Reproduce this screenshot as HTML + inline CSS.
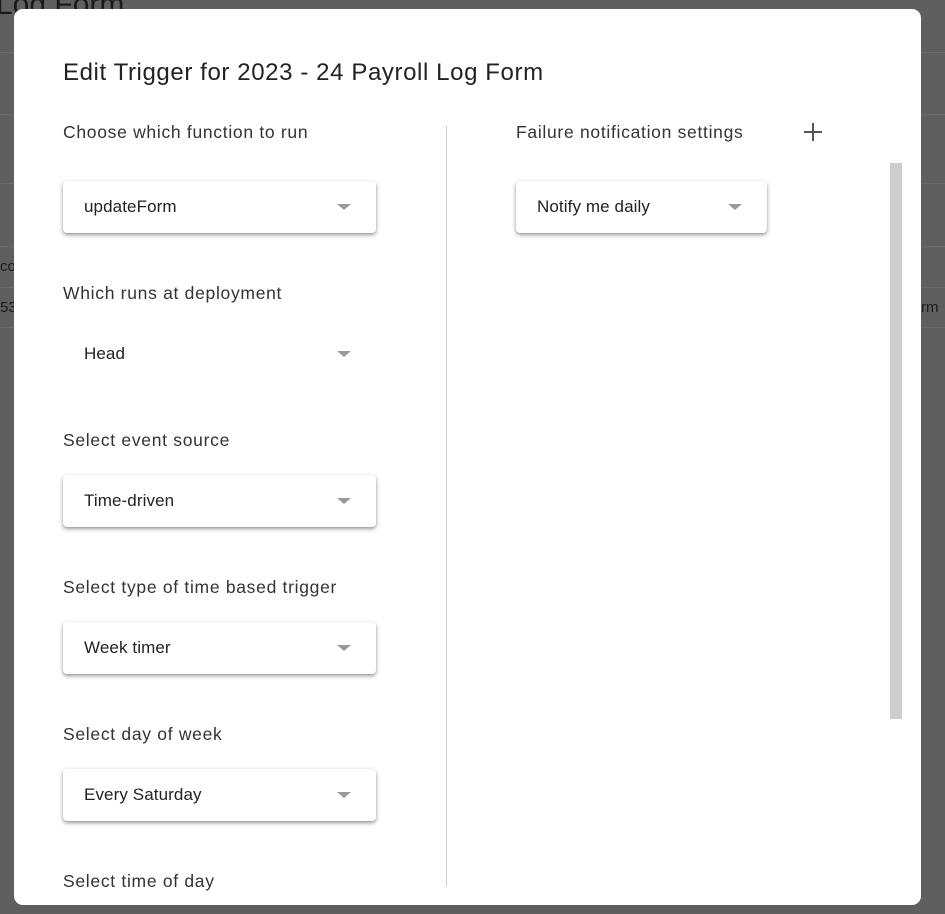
<!DOCTYPE html>
<html><head><style>
body{margin:0;width:945px;height:914px;background:#5f5f5f;position:relative;overflow:hidden;font-family:"Liberation Sans",sans-serif;}
.bgl{position:absolute;left:0;width:945px;height:1px;background:#6e6e6e}
.bgt{position:absolute;color:#1a1a1a;font-size:15px}
.dlg{position:absolute;left:14px;top:9px;width:907px;height:896px;background:#fff;border-radius:9px;overflow:hidden}
.title{position:absolute;left:49px;top:50px;font-size:24px;letter-spacing:0.6px;color:#222}
.lbl{position:absolute;font-size:17.5px;letter-spacing:0.7px;color:#333}
.sel{position:absolute;width:313px;height:52px;background:#fff;border-radius:4px;box-shadow:0 2px 5px rgba(0,0,0,.35),0 1px 2px rgba(0,0,0,.15)}
.sel span{position:absolute;left:21px;top:16px;font-size:17px;color:#222;letter-spacing:0.1px}
.sel i{position:absolute;right:25px;top:23px;width:0;height:0;border-left:7px solid transparent;border-right:7px solid transparent;border-top:6px solid #9a9a9a}
.flat{box-shadow:none}
</style></head><body>
<div class="bgt" style="left:-4px;top:-12px;font-size:30px">Log Form</div>
<div class="bgl" style="top:52px"></div><div class="bgl" style="top:114px"></div><div class="bgl" style="top:183px"></div><div class="bgl" style="top:246px"></div><div class="bgl" style="top:287px"></div><div class="bgl" style="top:327px"></div>
<div class="bgt" style="left:0;top:258px">co</div>
<div class="bgt" style="left:0;top:299px">53</div>
<div class="bgt" style="left:921px;top:299px">rm</div>
<div class="dlg">
<div class="title">Edit Trigger for 2023 - 24 Payroll Log Form</div>
<div class="lbl" style="left:49px;top:113px">Choose which function to run</div>
<div class="sel" style="left:49px;top:172px"><span>updateForm</span><i></i></div>
<div class="lbl" style="left:49px;top:274px">Which runs at deployment</div>
<div class="sel flat" style="left:49px;top:319px"><span>Head</span><i></i></div>
<div class="lbl" style="left:49px;top:421px">Select event source</div>
<div class="sel" style="left:49px;top:466px"><span>Time-driven</span><i></i></div>
<div class="lbl" style="left:49px;top:568px">Select type of time based trigger</div>
<div class="sel" style="left:49px;top:613px"><span>Week timer</span><i></i></div>
<div class="lbl" style="left:49px;top:715px">Select day of week</div>
<div class="sel" style="left:49px;top:760px"><span>Every Saturday</span><i></i></div>
<div class="lbl" style="left:49px;top:862px">Select time of day</div>
<div style="position:absolute;left:432px;top:117px;width:1px;height:760px;background:#ccc"></div>
<div class="lbl" style="left:502px;top:113px">Failure notification settings</div>
<div style="position:absolute;left:790px;top:122px;width:18px;height:2px;background:#555"></div>
<div style="position:absolute;left:798px;top:114px;width:2px;height:18px;background:#555"></div>
<div class="sel" style="left:502px;top:172px;width:251px"><span>Notify me daily</span><i></i></div>
<div style="position:absolute;left:876px;top:154px;width:12px;height:556px;background:#cdcdcd"></div>
</div>
</body></html>
